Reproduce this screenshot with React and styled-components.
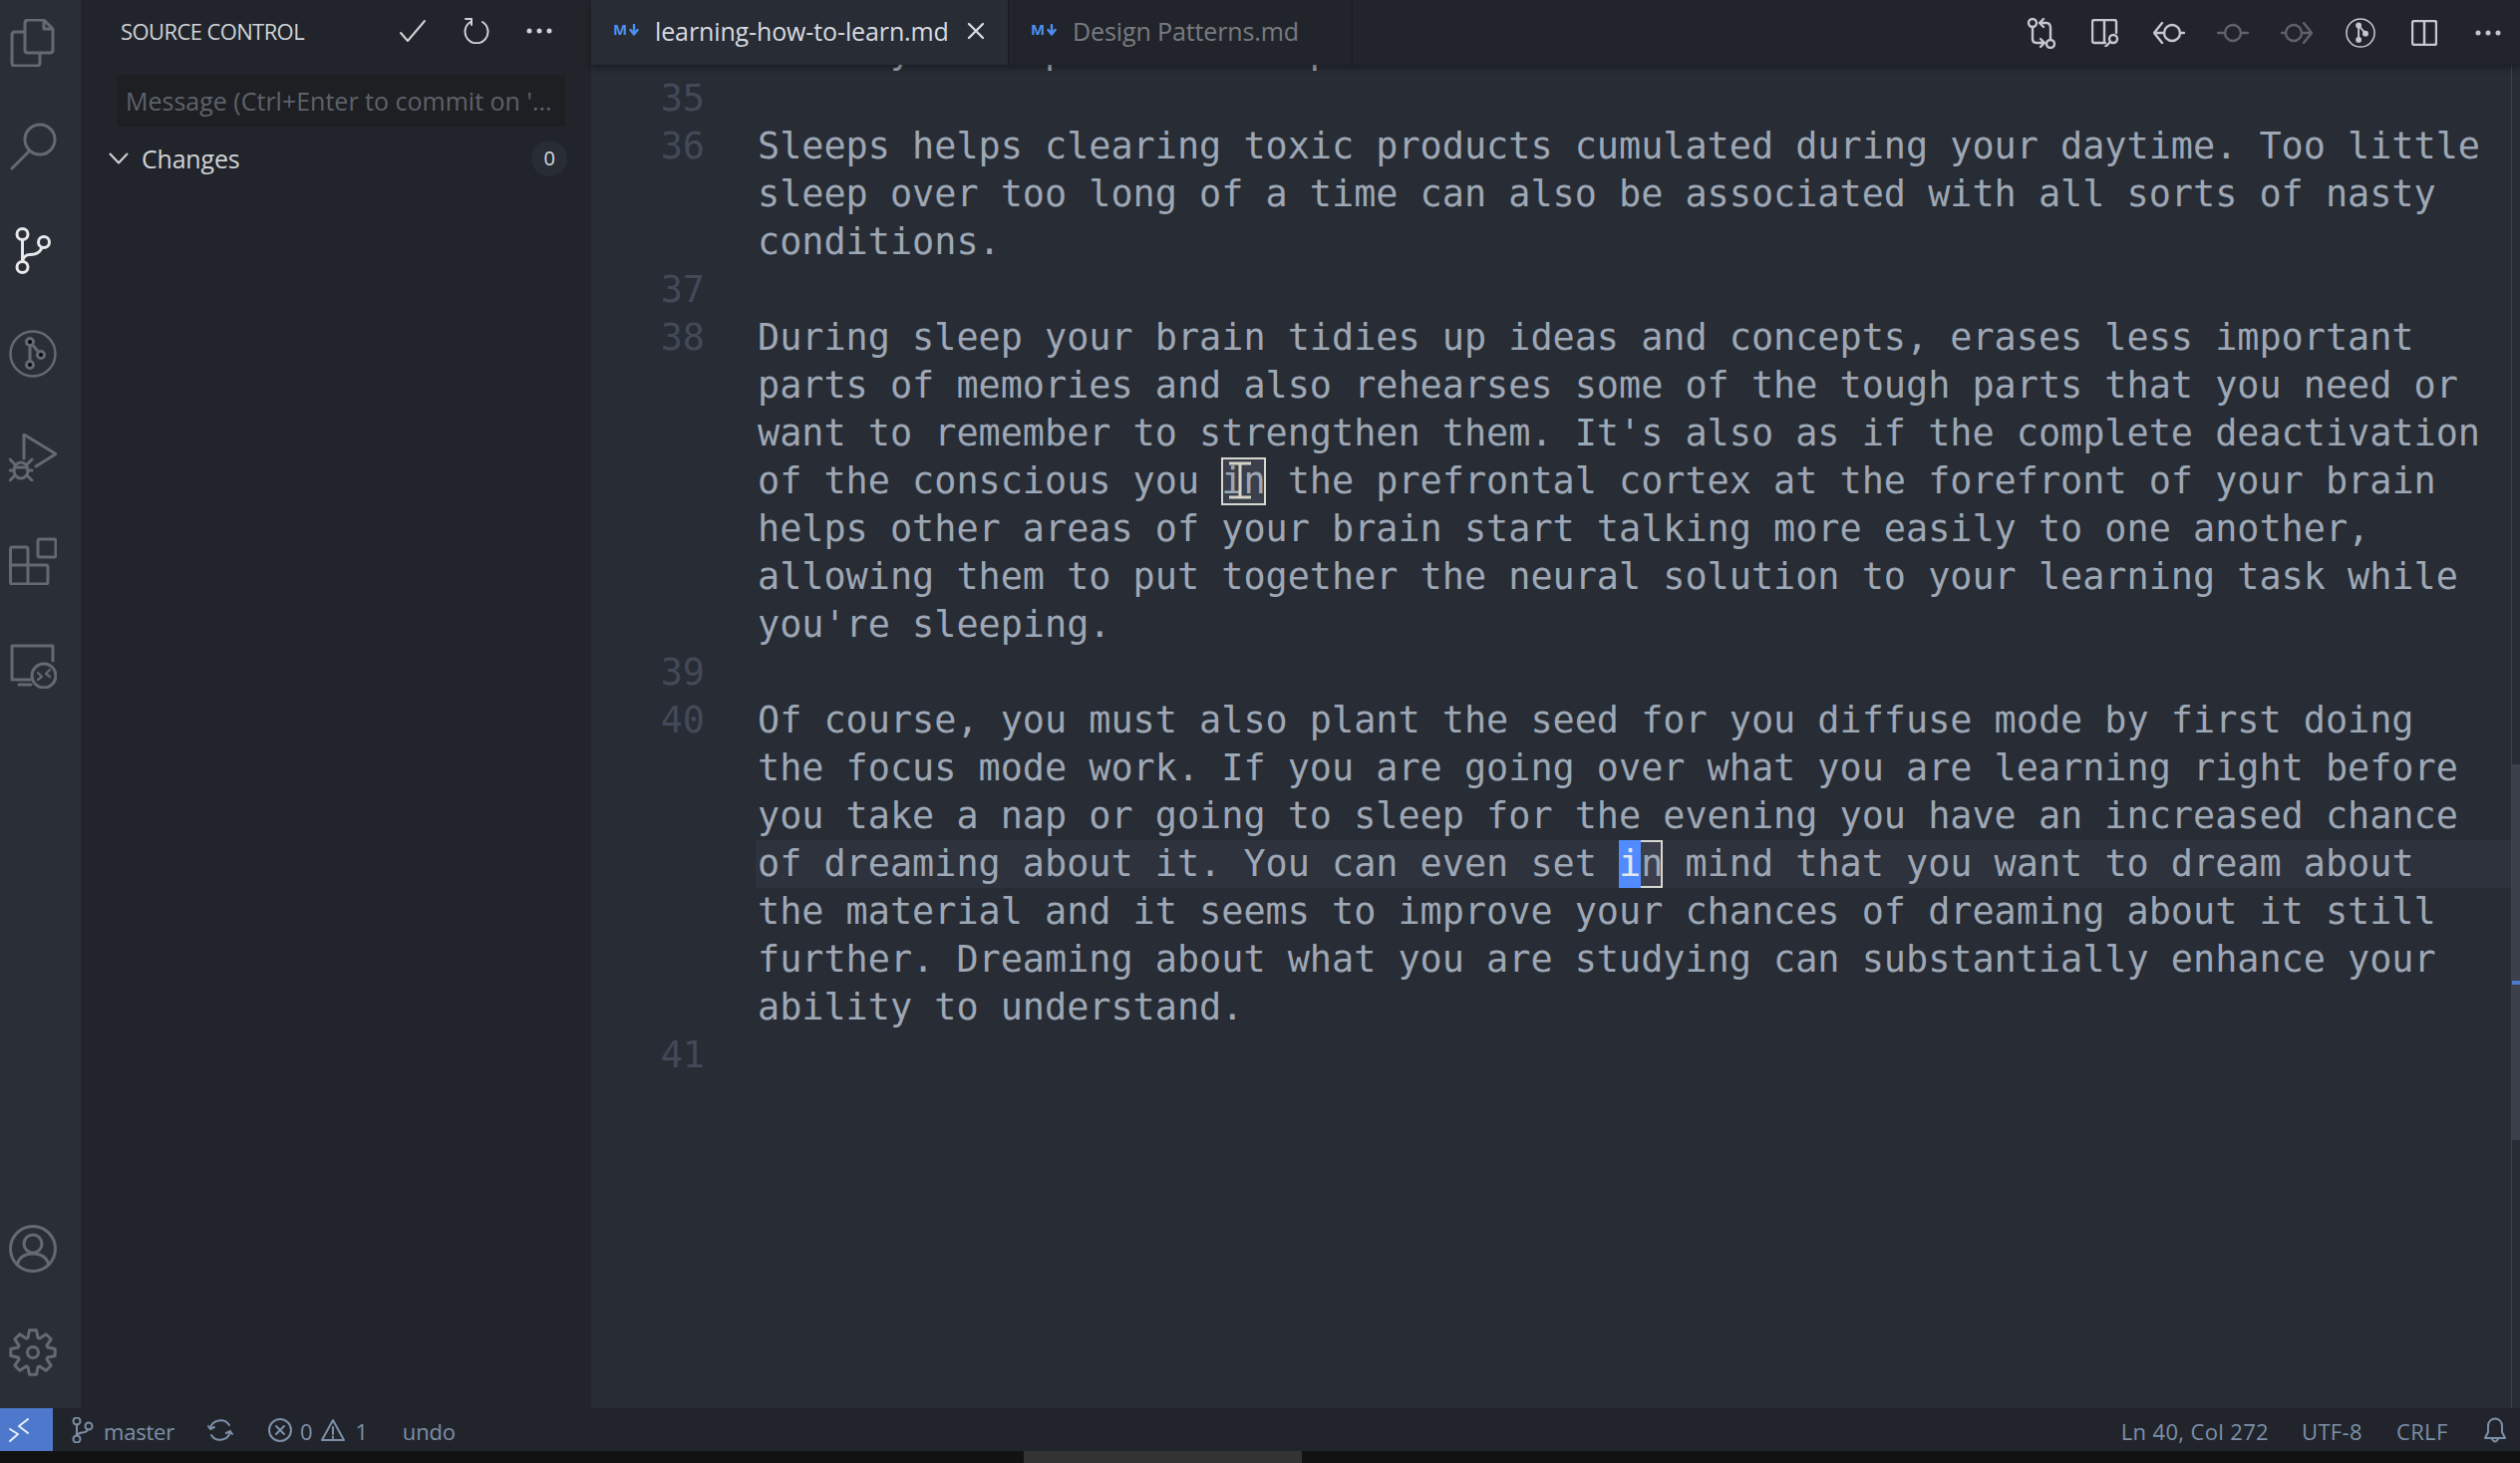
import React from "react";
import styled, { createGlobalStyle } from "styled-components";

const UI_FONT = `"Open Sans", "Noto Sans", sans-serif`;
const CODE_FONT = `"DejaVu Sans Mono", "Liberation Mono", monospace`;

const GlobalStyle = createGlobalStyle`
  html, body {
    margin: 0;
    height: 100%;
    background: #121212;
    overflow: hidden;
  }
  * { box-sizing: border-box; }
`;

const Shell = styled.div`
  width: 2528px;
  height: 1468px;
  display: flex;
  flex-direction: column;
  font-family: ${UI_FONT};
  overflow: hidden;
`;

const Main = styled.div`
  flex: 0 0 1413px;
  display: flex;
  min-height: 0;
`;

/* activity bar */
const ActivityBar = styled.nav`
  flex: 0 0 81px;
  padding: 19px 0 32px 9px;
  background: #2a2e36;
  display: flex;
  flex-direction: column;
  gap: 56px;
`;

const ActivitySpacer = styled.div`
  flex: 1;
`;

const Glyph = styled.svg`
  display: block;
  flex: none;
  fill: none;
  stroke: ${(p) => p.$color || "#c5c8d0"};
  stroke-width: ${(p) => p.$weight || 2.4};
  stroke-linecap: round;
  stroke-linejoin: round;
`;

const ActivityGlyph = ({ active, children }) => (
  <Glyph
    width="48"
    height="48"
    viewBox="0 0 48 48"
    $color={active ? "#e6e8ea" : "#656a72"}
    $weight={3}
  >
    {children}
  </Glyph>
);

/* sidebar */
const SideBar = styled.aside`
  flex: 0 0 512px;
  background: #21252b;
  display: flex;
  flex-direction: column;
`;

const SideHeader = styled.header`
  height: 62px;
  padding: 0 39px 0 40px;
  display: flex;
  align-items: center;
  color: #d0d3d8;
`;

const SideTitle = styled.h2`
  margin: 0;
  flex: 1;
  font-size: 22px;
  font-weight: 400;
  letter-spacing: -0.6px;
`;

const SideActions = styled.div`
  display: flex;
  align-items: center;
  gap: 36px;
`;

const CommitInput = styled.div`
  height: 52px;
  margin: 13px 26px 0 36px;
  padding-left: 9px;
  background: #1d1f23;
  color: #5d626a;
  font-size: 25px;
  line-height: 53px;
  white-space: nowrap;
  overflow: hidden;
`;

const ChangesRow = styled.div`
  margin: 14px 24px 0 28px;
  height: 36px;
  display: flex;
  align-items: center;
  color: #d0d3d8;
  font-size: 25px;
  letter-spacing: -0.2px;
`;

const ChangesLabel = styled.span`
  flex: 1;
  margin-left: 13px;
`;

const CountBadge = styled.span`
  width: 36px;
  height: 36px;
  border-radius: 50%;
  background: #282c34;
  color: #d7dae0;
  font-size: 20px;
  line-height: 36px;
  text-align: center;
`;

/* editor */
const EditorColumn = styled.section`
  flex: 1;
  min-width: 0;
  display: flex;
  flex-direction: column;
  background: #282c34;
`;

const TabBar = styled.div`
  flex: 0 0 65px;
  display: flex;
  background: #21252b;
  box-shadow: 0 3px 6px rgba(0, 0, 0, 0.35);
  position: relative;
  z-index: 2;
`;

const Tab = styled.div`
  width: ${(p) => p.$width}px;
  padding: 0 0 3px 22px;
  display: flex;
  align-items: center;
  background: ${(p) => (p.$active ? "#282c34" : "#21252b")};
  color: ${(p) => (p.$active ? "#d7dae0" : "#787b80")};
  border-right: 1px solid #181a1f;
  font-size: 25px;
  letter-spacing: -0.12px;
`;

const MdMark = styled.span`
  width: 27px;
  margin: -3px 15px 0 0;
  display: flex;
  align-items: center;
  gap: 2px;
  color: #4d8ff0;
  font-size: 15px;
  font-weight: 700;
  line-height: 15px;
  white-space: nowrap;
`;

const TabName = styled.span`
  flex: 1;
`;

const CloseButton = styled.span`
  margin-right: 23px;
`;

const EditorActions = styled.div`
  margin-left: auto;
  display: flex;
  align-items: center;
`;

const ActionSlot = styled.div`
  width: 64px;
  height: 65px;
  display: flex;
  align-items: center;
  justify-content: center;
`;

const EditorBody = styled.div`
  flex: 1;
  min-height: 0;
  display: flex;
  overflow: hidden;
`;

const CodeScroller = styled.div`
  flex: 1;
  margin-top: -38px;
  font-family: ${CODE_FONT};
  font-size: 36.8px;
  line-height: 48px;
  color: #9da7b5;
  white-space: pre;
`;

const CodeRow = styled.div`
  display: flex;
`;

const LineNumber = styled.div`
  flex: 0 0 165px;
  padding-right: 51px;
  text-align: right;
  color: #424958;
`;

const LineBlock = styled.div`
  flex: 1;
`;

const VisualLine = styled.div`
  height: 48px;
  padding-left: 2px;
  background: ${(p) => (p.$current ? "#2e323c" : "transparent")};
`;

const MatchBox = styled.span`
  display: inline-block;
  height: 48px;
  vertical-align: top;
  position: relative;
  background: #3a3f4b;
  box-shadow: inset 0 0 0 2px #d7d7d2;
`;

const SelectedChar = styled.span`
  display: inline-block;
  height: 48px;
  vertical-align: top;
  background: #528bff;
  color: #e2e6ec;
`;

const MouseCursor = styled.svg`
  position: absolute;
  left: 4px;
  top: 4px;
  fill: none;
  stroke: #d5d3c6;
  stroke-width: 3;
`;

const OverviewRuler = styled.div`
  flex: 0 0 9px;
  position: relative;
  border-left: 1px solid #3f444e;
`;

const RulerSlider = styled.div`
  position: absolute;
  left: 0;
  right: 0;
  top: 702px;
  height: 377px;
  background: #3b404b;
`;

const RulerMark = styled.div`
  position: absolute;
  left: 0;
  right: 0;
  top: 217px;
  height: 4px;
  background: #4d78cc;
`;

/* status bar */
const StatusBar = styled.footer`
  flex: 0 0 43px;
  display: flex;
  align-items: center;
  background: #21252b;
  color: #7d8fa8;
  font-size: 22px;
  letter-spacing: -0.2px;
`;

const RemoteButton = styled.div`
  width: 53px;
  height: 43px;
  padding-left: 9px;
  display: flex;
  align-items: center;
  background: #4d78cc;
`;

const StatusGroup = styled.div`
  display: flex;
  align-items: center;
  gap: ${(p) => p.$gap || 8}px;
  margin-left: ${(p) => p.$left || 0}px;
`;

const StatusText = styled.span`
  margin-top: 3px;
  letter-spacing: ${(p) => (p.$wide ? "0.35px" : "inherit")};
`;

const BottomStrip = styled.div`
  flex: 0 0 12px;
  padding-left: 1027px;
  background: #121212;
`;

const StripThumb = styled.div`
  width: 279px;
  height: 12px;
  background: #333333;
`;

const gearPath = () => {
  const points = [];
  const teeth = 8;
  for (let i = 0; i < teeth; i++) {
    const a = (i / teeth) * Math.PI * 2 - Math.PI / 2;
    const step = (Math.PI * 2) / teeth;
    const at = (r, d) =>
      `${(24 + r * Math.cos(a + d * step)).toFixed(1)} ${(24 + r * Math.sin(a + d * step)).toFixed(1)}`;
    points.push(at(15.5, -0.42), at(22.5, -0.2), at(22.5, 0.2), at(15.5, 0.42));
  }
  return `M${points.join("L")}Z`;
};

const rows = [
  { lines: ["Also  your top of the heap"] },
  { n: 35, lines: [""] },
  {
    n: 36,
    lines: [
      "Sleeps helps clearing toxic products cumulated during your daytime. Too little",
      "sleep over too long of a time can also be associated with all sorts of nasty",
      "conditions.",
    ],
  },
  { n: 37, lines: [""] },
  {
    n: 38,
    lines: [
      "During sleep your brain tidies up ideas and concepts, erases less important",
      "parts of memories and also rehearses some of the tough parts that you need or",
      "want to remember to strengthen them. It's also as if the complete deactivation",
      <>
        of the conscious you{" "}
        <MatchBox>
          in
          <MouseCursor width="30" height="40" viewBox="0 0 30 40">
            <path d="M4 2H26M15 2V36M4 36H26" />
          </MouseCursor>
        </MatchBox>{" "}
        the prefrontal cortex at the forefront of your brain
      </>,
      "helps other areas of your brain start talking more easily to one another,",
      "allowing them to put together the neural solution to your learning task while",
      "you're sleeping.",
    ],
  },
  { n: 39, lines: [""] },
  {
    n: 40,
    lines: [
      "Of course, you must also plant the seed for you diffuse mode by first doing",
      "the focus mode work. If you are going over what you are learning right before",
      "you take a nap or going to sleep for the evening you have an increased chance",
      {
        current: true,
        content: (
          <>
            of dreaming about it. You can even set{" "}
            <MatchBox>
              <SelectedChar>i</SelectedChar>n
            </MatchBox>{" "}
            mind that you want to dream about
          </>
        ),
      },
      "the material and it seems to improve your chances of dreaming about it still",
      "further. Dreaming about what you are studying can substantially enhance your",
      "ability to understand.",
    ],
  },
  { n: 41, lines: [""] },
];

const GraphIcon = () => (
  <>
    <circle cx="24" cy="24" r="22.5" strokeWidth="2.5" />
    <path d="M21 12V35M21 12L32 25" strokeWidth="3" />
    <circle cx="21" cy="12" r="3.5" fill="currentColor" />
    <circle cx="32" cy="25" r="3.5" fill="currentColor" />
    <circle cx="21" cy="35" r="3.5" fill="currentColor" />
  </>
);

const More = ({ color }) => (
  <Glyph width="26" height="8" viewBox="0 0 26 8" $color={color}>
    <circle cx="3" cy="4" r="2.5" fill={color} stroke="none" />
    <circle cx="13" cy="4" r="2.5" fill={color} stroke="none" />
    <circle cx="23" cy="4" r="2.5" fill={color} stroke="none" />
  </Glyph>
);

const MdIcon = () => (
  <MdMark>
    M
    <Glyph width="10" height="12" viewBox="0 0 10 12" $color="#4d8ff0" $weight={2.4}>
      <path d="M5 1V9M1.500 6L5 10.500L8.500 6" />
    </Glyph>
  </MdMark>
);

export default function App() {
  return (
    <Shell>
      <GlobalStyle />
      <Main>
        <ActivityBar>
          <ActivityGlyph>
            <path d="M16 4q0-3 3-3H35L44 10V31q0 3-3 3H19q-3 0-3-3ZM35 1V10H44" />
            <path d="M16 13H6q-3 0-3 3V44q0 3 3 3H28q3 0 3-3V34" />
          </ActivityGlyph>
          <ActivityGlyph>
            <circle cx="31" cy="17" r="15" />
            <path d="M20 29L3 46" />
          </ActivityGlyph>
          <ActivityGlyph active>
            <circle cx="13.5" cy="8" r="5.5" />
            <circle cx="35" cy="16" r="5.5" />
            <circle cx="13.5" cy="41" r="5.5" />
            <path d="M13.5 13.5V35.5M33 21.5C31 27 27 28.5 21 28.5C17 28.5 14.5 31 13.5 35" />
          </ActivityGlyph>
          <ActivityGlyph>
            <GraphIcon />
          </ActivityGlyph>
          <ActivityGlyph>
            <path d="M15 25V1L47 20.5L27 33" />
            <ellipse cx="12" cy="37" rx="7" ry="8" />
            <path d="M6 34H18M1 26L6 31M23 26L18 31M1 37H5M23 37H19M1 47L6 42M23 47L18 42" />
          </ActivityGlyph>
          <ActivityGlyph>
            <rect x="29" y="2" width="18" height="18" rx="2" />
            <path d="M3 10H17Q19 10 19 12V28H37Q39 28 39 30V45Q39 47 37 47H3Q1.500 47 1.500 45V12Q1.500 10 3 10ZM1.500 28H19V47" />
          </ActivityGlyph>
          <ActivityGlyph>
            <path d="M21 39H3V5H44V20M10 44H22" />
            <circle cx="35" cy="35" r="12" />
            <path d="M29 32L33 36L29 39M41 29L37 33L41 36" strokeWidth="2.2" />
          </ActivityGlyph>
          <ActivitySpacer />
          <ActivityGlyph>
            <circle cx="24" cy="24" r="22.5" />
            <circle cx="24" cy="19" r="9" />
            <path d="M8 40C10 33 16 29 24 29C32 29 38 33 40 40" />
          </ActivityGlyph>
          <ActivityGlyph>
            <path d={gearPath()} />
            <circle cx="24" cy="24" r="5.500" />
          </ActivityGlyph>
        </ActivityBar>

        <SideBar>
          <SideHeader>
            <SideTitle>SOURCE CONTROL</SideTitle>
            <SideActions>
              <Glyph width="28" height="24" viewBox="0 0 28 24" $color="#d0d3d8" $weight={2}>
                <path d="M2 14L9 22L26 2" />
              </Glyph>
              <Glyph width="28" height="26" viewBox="0 0 28 26" $color="#d0d3d8" $weight={2}>
                <path d="M8 4A11.500 11.500 0 1 0 20 4M3 1H9V7" />
              </Glyph>
              <More color="#d0d3d8" />
            </SideActions>
          </SideHeader>
          <CommitInput>Message (Ctrl+Enter to commit on '...</CommitInput>
          <ChangesRow>
            <Glyph width="20" height="12" viewBox="0 0 20 12" $color="#d0d3d8" $weight={2}>
              <path d="M1.500 1.500L10 10.500L18.500 1.500" />
            </Glyph>
            <ChangesLabel>Changes</ChangesLabel>
            <CountBadge>0</CountBadge>
          </ChangesRow>
        </SideBar>

        <EditorColumn>
          <TabBar>
            <Tab $active $width={419}>
              <MdIcon />
              <TabName>learning-how-to-learn.md</TabName>
              <CloseButton>
                <Glyph width="18" height="18" viewBox="0 0 18 18" $color="#d7dae0">
                  <path d="M2 2L16 16M16 2L2 16" />
                </Glyph>
              </CloseButton>
            </Tab>
            <Tab $width={345}>
              <MdIcon />
              <TabName>Design Patterns.md</TabName>
            </Tab>
            <EditorActions>
              <ActionSlot>
                <Glyph width="30" height="32" viewBox="0 0 30 32">
                  <circle cx="6" cy="6" r="4" />
                  <circle cx="24" cy="27" r="4" />
                  <path d="M6 10V22Q6 26 10 26H18M14 22L18 26L14 30M24 23V11Q24 6 20 6H13M17 2L13 6L17 10" />
                </Glyph>
              </ActionSlot>
              <ActionSlot>
                <Glyph width="28" height="28" viewBox="0 0 28 28">
                  <path d="M14 24H3Q1 24 1 22V3Q1 1 3 1H23Q25 1 25 3V14M13 1V24" />
                  <circle cx="22" cy="20" r="4" />
                  <path d="M19 23L14 28" />
                </Glyph>
              </ActionSlot>
              <ActionSlot>
                <Glyph width="32" height="22" viewBox="0 0 32 22">
                  <circle cx="19" cy="11" r="8" />
                  <path d="M1 11H11M27 11H31M9 1L1 11L9 21" />
                </Glyph>
              </ActionSlot>
              <ActionSlot>
                <Glyph width="32" height="22" viewBox="0 0 32 22" $color="#5f6269">
                  <circle cx="16" cy="11" r="8" />
                  <path d="M1 11H8M24 11H31" />
                </Glyph>
              </ActionSlot>
              <ActionSlot>
                <Glyph width="32" height="22" viewBox="0 0 32 22" $color="#5f6269">
                  <circle cx="13" cy="11" r="8" />
                  <path d="M1 11H5M21 11H31M23 1L31 11L23 21" />
                </Glyph>
              </ActionSlot>
              <ActionSlot>
                <Glyph width="30" height="30" viewBox="0 0 48 48" color="#c5c8d0">
                  <GraphIcon />
                </Glyph>
              </ActionSlot>
              <ActionSlot>
                <Glyph width="26" height="26" viewBox="0 0 26 26">
                  <rect x="1" y="1" width="24" height="24" rx="2" />
                  <path d="M13 1V25" />
                </Glyph>
              </ActionSlot>
              <ActionSlot>
                <More color="#c5c8d0" />
              </ActionSlot>
            </EditorActions>
          </TabBar>

          <EditorBody>
            <CodeScroller>
              {rows.map((row, i) => (
                <CodeRow key={i}>
                  <LineNumber>{row.n}</LineNumber>
                  <LineBlock>
                    {row.lines.map((line, j) => {
                      const current = line && line.current;
                      return (
                        <VisualLine key={j} $current={current}>
                          {current ? line.content : line}
                        </VisualLine>
                      );
                    })}
                  </LineBlock>
                </CodeRow>
              ))}
            </CodeScroller>
            <OverviewRuler>
              <RulerSlider>
                <RulerMark />
              </RulerSlider>
            </OverviewRuler>
          </EditorBody>
        </EditorColumn>
      </Main>

      <StatusBar>
        <RemoteButton>
          <Glyph width="20" height="24" viewBox="0 0 20 24" $color="#e8eefb" $weight={2}>
            <path d="M1 11L9 16L1 23M19 1L10 8L19 15" />
          </Glyph>
        </RemoteButton>
        <StatusGroup $left={19} $gap={10}>
          <Glyph width="22" height="26" viewBox="0 0 22 26" $color="#7d8fa8" $weight={2}>
            <circle cx="5" cy="4" r="3.500" />
            <circle cx="17" cy="9" r="3.500" />
            <circle cx="5" cy="22" r="3.500" />
            <path d="M5 7.500V18.500M16 12.500C15 16 10 15 8 16C6 17 5 17 5 18.500" />
          </Glyph>
          <StatusText>master</StatusText>
        </StatusGroup>
        <StatusGroup $left={33}>
          <Glyph width="26" height="24" viewBox="0 0 26 24" $color="#7d8fa8" $weight={2}>
            <path d="M3 10C5 2 17 -1 22 7M23 14C21 22 9 25 4 17M1 8L3 11L7 9M25 16L23 13L19 15" />
          </Glyph>
        </StatusGroup>
        <StatusGroup $left={35}>
          <Glyph width="24" height="26" viewBox="0 0 24 26" $color="#7d8fa8" $weight={2}>
            <circle cx="12" cy="13" r="11" />
            <path d="M8 9L16 17M16 9L8 17" />
          </Glyph>
          <StatusText>0</StatusText>
        </StatusGroup>
        <StatusGroup $left={9} $gap={10}>
          <Glyph width="24" height="24" viewBox="0 0 24 24" $color="#7d8fa8" $weight={2}>
            <path d="M12 2L23 22H1ZM12 9V16M12 18.500V20" />
          </Glyph>
          <StatusText>1</StatusText>
        </StatusGroup>
        <StatusGroup $left={35}>
          <StatusText>undo</StatusText>
        </StatusGroup>
        <StatusGroup $left={1671}>
          <StatusText $wide>Ln 40, Col 272</StatusText>
        </StatusGroup>
        <StatusGroup $left={33}>
          <StatusText $wide>UTF-8</StatusText>
        </StatusGroup>
        <StatusGroup $left={34}>
          <StatusText $wide>CRLF</StatusText>
        </StatusGroup>
        <StatusGroup $left={36}>
          <Glyph width="22" height="26" viewBox="0 0 22 26" $color="#7d8fa8" $weight={2}>
            <path d="M1 21H21L18 15V9C18 -1 4 -1 4 9V15ZM8 22Q11 27 14 22" />
          </Glyph>
        </StatusGroup>
      </StatusBar>
      <BottomStrip>
        <StripThumb />
      </BottomStrip>
    </Shell>
  );
}
